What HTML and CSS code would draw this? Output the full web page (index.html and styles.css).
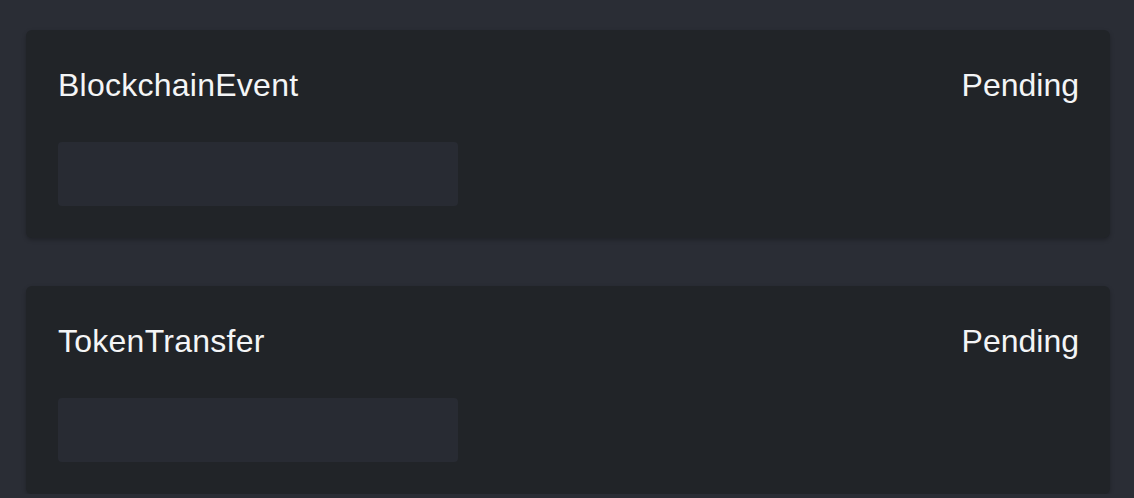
FILE: index.html
```html
<!DOCTYPE html>
<html lang="en">
<head>
<meta charset="utf-8">
<title>Events</title>
<link rel="stylesheet" href="styles.css">
</head>
<body>
<main class="list">
  <section class="card">
    <div class="card-head">
      <span class="card-title">BlockchainEvent</span>
      <span class="card-status">Pending</span>
    </div>
    <div class="skeleton"></div>
  </section>
  <section class="card">
    <div class="card-head">
      <span class="card-title">TokenTransfer</span>
      <span class="card-status">Pending</span>
    </div>
    <div class="skeleton"></div>
  </section>
</main>
</body>
</html>
```

FILE: styles.css
```css
html, body {
  margin: 0;
  padding: 0;
  background: #2a2d35;
  font-family: "Liberation Sans", Arial, Helvetica, sans-serif;
  color: #f4f5f6;
}

.list {
  display: flex;
  flex-direction: column;
  gap: 48px;
  padding: 30px 24px 0 26px;
}

.card {
  background: #212428;
  border-radius: 6px;
  padding: 32px 31px 32px 32px;
  box-shadow: 0 2px 4px rgba(0, 0, 0, 0.25);
  display: flex;
  flex-direction: column;
  gap: 32px;
}

.card-head {
  display: flex;
  justify-content: space-between;
  align-items: center;
  font-size: 32px;
  line-height: 47px;
}

.card-title {
  letter-spacing: 0.25px;
}

.skeleton {
  width: 400px;
  height: 64px;
  margin-top: 1px;
  border-radius: 4px;
  background: #282b33;
}
```
